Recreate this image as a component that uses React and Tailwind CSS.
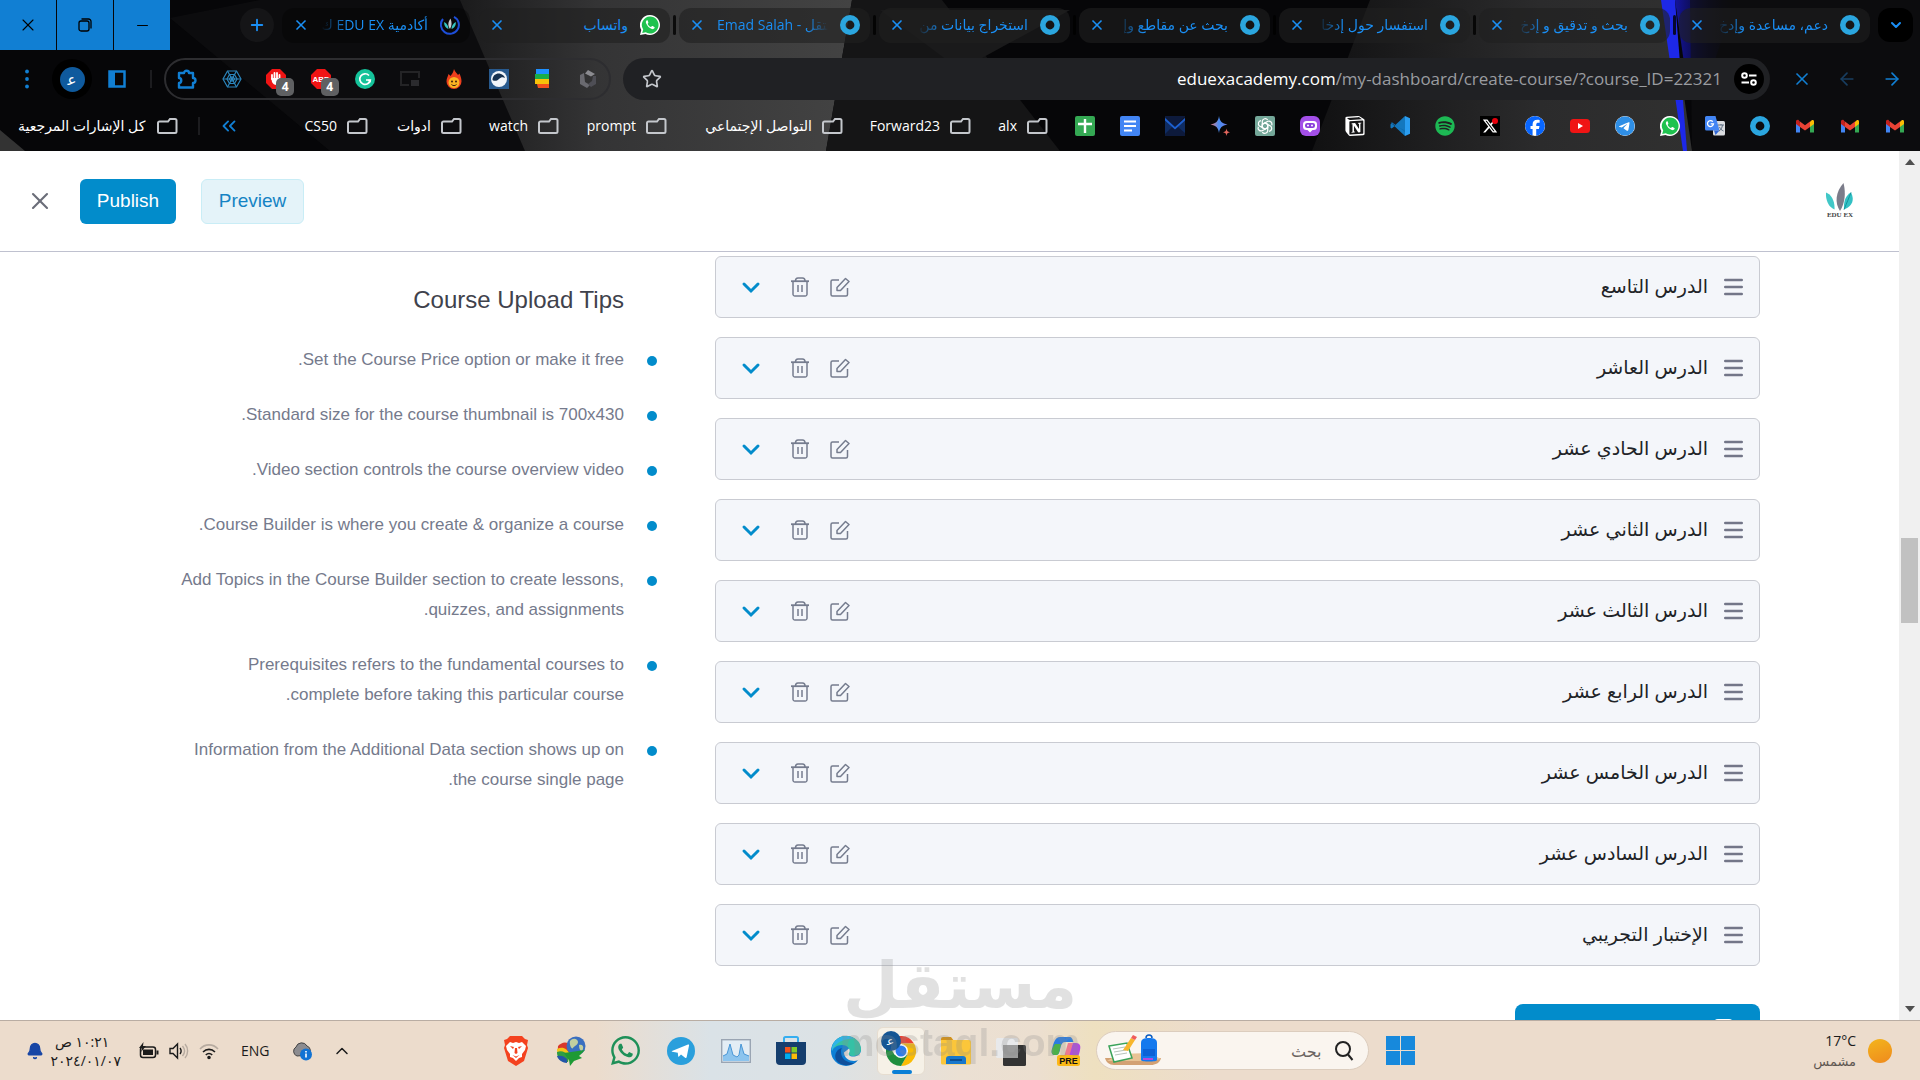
import React from "react";
import {
  FaWhatsapp,
  FaXTwitter,
  FaFacebook,
  FaSpotify,
  FaTelegram,
} from "react-icons/fa6";
import { SiNotion } from "react-icons/si";
import {
  ArrowLeft,
  ArrowRight,
  Bell,
  ChevronDown,
  ChevronUp,
  ChevronsLeft,
  Minus,
  Plus,
  Star,
  X,
} from "lucide-react";

/* ---------- shared small drawings ---------- */

const Ring = () => (
  <svg viewBox="0 0 20 20" className="size-5 shrink-0">
    <circle cx="10" cy="10" r="7.200" fill="none" stroke="#2ba6df" strokeWidth="5.600" />
  </svg>
);

const WhatsappBadge = () => (
  <svg viewBox="0 0 20 20" className="size-5 shrink-0">
    <path d="M10 0a10 10 0 1 1-4.600 18.900L0 20l1.300-5A10 10 0 0 1 10 0z" fill="#fff" />
    <path d="M10 1.500a8.500 8.500 0 1 1-4.300 15.800L2.200 18l1-3.400A8.500 8.500 0 0 1 10 1.500z" fill="#1fc24f" />
    <path
      d="M6.800 5.300c-1 .8-1.200 2-.6 3.200 1.200 2.700 3 4.500 5.600 5.500 1.200.4 2.200 0 2.800-1 .2-.4.100-.8-.3-1l-1.700-.9c-.4-.2-.7-.1-.9.2l-.6.8c-1.500-.6-2.700-1.700-3.500-3.200l.6-.8c.2-.3.200-.5.100-.8L7.700 5.600c-.2-.4-.5-.5-.9-.3z"
      fill="#fff"
    />
  </svg>
);

const EduTabIcon = () => (
  <svg viewBox="0 0 20 20" className="size-5 shrink-0">
    <path d="M3 4A9 9 0 1 0 14 1.800" fill="none" stroke="#1d4ed8" strokeWidth="2" />
    <path d="M10 14C7.500 11 8 7 10.500 3.500 12 7 12 11 10 14z" fill="#c9ccd1" />
    <path d="M8.500 14C5 12.500 4 10 4.200 7 7 8.500 8.500 11 8.500 14z" fill="#35c3c1" />
    <path d="M11.500 14c0-3 1.500-5.500 4.300-7 .2 3-.8 5.500-4.300 7z" fill="#35c3c1" />
  </svg>
);

const FolderIcon = () => (
  <svg viewBox="0 0 21 18" className="h-[18px] w-[21px] shrink-0">
    <path
      d="M2.500 4.500h8.500l2-2.500h5a1.500 1.500 0 0 1 1.500 1.500v11a1.500 1.500 0 0 1-1.500 1.500h-15.500a1.500 1.500 0 0 1-1.500-1.500v-8.500a1.500 1.500 0 0 1 1.500-1.500z"
      fill="none"
      stroke="#c4c7cc"
      strokeWidth="2"
    />
  </svg>
);

const GmailIcon = () => (
  <svg viewBox="0 0 20 20" className="size-5">
    <path d="M1 5v11.500h4V9z" fill="#4285f4" />
    <path d="M19 5v11.500h-4V9z" fill="#34a853" />
    <path d="M1 5.500V8l4 3V6.500L3.500 4C2 3.500 1 4.500 1 5.500z" fill="#c5221f" />
    <path d="M3 4l2 2v5l5 3.500L15 11V6l2-2-7 5.300z" fill="#ea4335" />
    <path d="M19 5.500V8l-4 3V6l1.500-1.500C18 3.500 19 4.500 19 5.500z" fill="#fbbc04" />
  </svg>
);

const TranslateIcon = () => (
  <svg viewBox="0 0 20 20" className="size-5">
    <rect x="8" y="5" width="12" height="14.500" rx="1.500" fill="#dadce0" />
    <path d="M1.500 0h9l4 14.500H1.500A1.500 1.500 0 0 1 0 13V1.500A1.500 1.500 0 0 1 1.500 0z" fill="#4285f4" />
    <path d="M9 14.500h5.500L10.500 19z" fill="#3067d5" />
    <path d="M7.800 5.600a3 3 0 1 0 .7 2.200H5.700" fill="none" stroke="#fff" strokeWidth="1.300" />
    <path d="M13 9h6M16 8v1M14 15c2-1 3-3 3.500-6M14.500 11c.8 2 2 3 4 4" stroke="#5f6f82" fill="none" />
  </svg>
);

const VsCodeIcon = () => (
  <svg viewBox="0 0 20 20" className="size-5">
    <path d="M15 0 4.500 9.700 1.700 7.500.5 8.200v3.600l1.200.7 2.800-2.200L15 20V5.500L8.500 10 15 14.500z" fill="#1478bd" />
    <path d="M15 0l5 2.200v15.600L15 20z" fill="#2a9df0" />
    <path d="M15 14.500.7 7.200l1.300-1L15 16z" fill="#0f6cb0" />
  </svg>
);

const BotIcon = () => (
  <svg viewBox="0 0 20 20" className="size-5">
    <rect width="20" height="20" rx="6" fill="#a34fe8" />
    <rect x="3" y="5" width="14" height="9" rx="3.500" fill="#fff" />
    <rect x="5" y="7" width="10" height="5" rx="2.200" fill="#8b3fdc" />
    <circle cx="8" cy="9.500" r="1" fill="#fff" />
    <circle cx="12" cy="9.500" r="1" fill="#fff" />
    <path d="M7 13.500h6l-3 3z" fill="#fff" />
  </svg>
);

const GptIcon = () => (
  <svg viewBox="0 0 20 20" className="size-5">
    <rect width="20" height="20" rx="2" fill="#74a799" />
    <g fill="none" stroke="#fff" strokeWidth="1.200">
      {[0, 60, 120, 180, 240, 300].map((a) => (
        <path key={a} transform={`rotate(${a} 10 10)`} d="M7.300 8.400V5.200a3 3 0 0 1 5.400-1.300M7.300 8.400l2.700-1.600 2.800 1.600" />
      ))}
    </g>
  </svg>
);

const SparkIcon = () => (
  <svg viewBox="0 0 20 20" className="size-5">
    <defs>
      <linearGradient id="spark" x1="0" y1="0" x2="1" y2="0">
        <stop offset="0" stopColor="#e07a7a" />
        <stop offset=".5" stopColor="#4a8df5" />
        <stop offset="1" stopColor="#6d7be0" />
      </linearGradient>
    </defs>
    <path d="M9 0c.8 5.500 3 7.500 8.500 8.500C12 9.500 9.800 11.500 9 17 8.200 11.500 6 9.500.5 8.500 6 7.500 8.200 5.500 9 0z" fill="url(#spark)" />
    <path d="M16.500 12.500c.4 2.600 1 3.300 3.500 3.700-2.500.5-3.100 1.200-3.500 3.800-.4-2.600-1-3.300-3.500-3.800 2.500-.4 3.100-1.100 3.500-3.700z" fill="#e5675e" />
  </svg>
);

const EnvelopeXIcon = () => (
  <svg viewBox="0 0 20 20" className="size-5">
    <rect width="20" height="20" fill="#0d1a3c" />
    <path d="M0 0l10 11L20 0v4L10 14 0 4z" fill="#10172e" />
    <path d="M0 1l10 10L20 3v14l-7-6-3 2.500L7 11l-7 7z" fill="#0f2c62" />
    <path d="M0 2l10 9L20 2v2.500L10 13.500 0 4.500z" fill="#1d5fd0" />
  </svg>
);

const DocsIcon = () => (
  <svg viewBox="0 0 20 20" className="size-5">
    <rect width="20" height="20" rx="2" fill="#4285f4" />
    <path d="M4 5.500h12M4 10h12M4 14.500h8" stroke="#fff" strokeWidth="2" />
  </svg>
);

const SheetsIcon = () => (
  <svg viewBox="0 0 20 20" className="size-5">
    <rect width="20" height="20" rx="2" fill="#34a853" />
    <path d="M3 8h14M10 3v14" stroke="#fff" strokeWidth="2.400" />
  </svg>
);

/* ---------- browser window ---------- */

const Wallpaper = () => (
  <svg viewBox="0 0 1920 151" preserveAspectRatio="none" className="absolute inset-0 size-full" aria-hidden="true">
    <defs>
      <linearGradient id="wGray" x1="0" x2="1">
        <stop offset="0" stopColor="#1b1b1c" />
        <stop offset=".35" stopColor="#343435" />
        <stop offset="1" stopColor="#434343" />
      </linearGradient>
      <linearGradient id="wMid" x1="0" x2="1">
        <stop offset="0" stopColor="#111112" />
        <stop offset=".6" stopColor="#2b2b2c" />
        <stop offset="1" stopColor="#303030" />
      </linearGradient>
      <linearGradient id="wBlue" x1="0" x2="1">
        <stop offset="0" stopColor="#1414a0" />
        <stop offset="1" stopColor="#08081a" stopOpacity="0" />
      </linearGradient>
    </defs>
    <rect width="1920" height="151" fill="#060608" />
    <path d="M170 18 260 0h230l35 151H330z" fill="#101011" opacity=".7" />
    <path d="M460 0h392l-26 151H525z" fill="url(#wGray)" />
    <path d="M852 0h90l118 151H826z" fill="#151516" />
    <path d="M880 10h190l-110 60z" fill="#1a1a1b" />
    <path d="M1370 0h300l22 151h-380z" fill="url(#wMid)" />
    <path d="M1675 0h60l-20 60-30 10z" fill="url(#wBlue)" />
    <path d="M1690 0h230v151h-228z" fill="#101012" opacity=".6" />
    <path d="M1661 0h14l12 151h-4z" fill="#1d28e8" />
    <path d="M0 130l25 21H0z" fill="#333" />
  </svg>
);

const tabs = [
  { title: "دعم، مساعدة وإدخ", icon: <Ring />, fade: true },
  { title: "بحث و تدقيق و إدخ", icon: <Ring />, fade: true },
  { title: "استفسار حول إدخا", icon: <Ring />, fade: true },
  { title: "بحث عن مقاطع وإ", icon: <Ring />, fade: true },
  { title: "استخراج بيانات من", icon: <Ring />, fade: true },
  { title: "Emad Salah - مستقل", icon: <Ring />, ltr: true },
  { title: "واتساب", icon: <WhatsappBadge /> },
  { title: "أكادمية EDU EX ك", icon: <EduTabIcon />, fade: true, active: true },
];

const Tab = ({ tab }) => (
  <div
    role="tab"
    aria-selected={!!tab.active}
    className={
      "flex h-[35px] items-center gap-3 rounded-xl ps-2.5 " +
      (tab.active ? "w-[188px] bg-black/30 pe-[11px]" : "w-[191px] bg-[#202020]/60 pe-2.5")
    }
  >
    {tab.icon}
    <span
      dir={tab.ltr ? "ltr" : "rtl"}
      className={
        "min-w-0 flex-1 overflow-hidden text-[14px] leading-6 whitespace-nowrap text-[#1a8ff5] " +
        (tab.fade ? "[mask-image:linear-gradient(to_left,black_75%,transparent)]" : "") +
        (tab.ltr ? "[mask-image:linear-gradient(to_right,black_80%,transparent)]" : "")
      }
    >
      {tab.title}
    </span>
    <button aria-label="إغلاق" className="text-[#1a8ff5]">
      <X size={16} strokeWidth={2.5} />
    </button>
  </div>
);

const TabStrip = () => (
  <div className="flex h-[50px] items-center">
    <button aria-label="بحث" className="ms-[7px] flex h-[34px] w-[35px] items-center justify-center rounded-xl bg-black text-[#1a8ff5]">
      <ChevronDown size={16} strokeWidth={3} />
    </button>
    <div role="tablist" className="ms-2 flex items-center">
      {tabs.map((t, i) => (
        <React.Fragment key={t.title}>
          {i > 0 && (
            <span className={"mx-[3px] h-5 w-[3px] rounded " + (t.active ? "bg-transparent" : "bg-black/80")} />
          )}
          <Tab tab={t} />
        </React.Fragment>
      ))}
    </div>
    <button aria-label="علامة تبويب جديدة" className="ms-2 flex size-[34px] items-center justify-center rounded-full bg-[#151517] text-[#1a8ff5]">
      <Plus size={18} strokeWidth={2.5} />
    </button>
    <div className="ms-auto flex h-full gap-px text-black">
      <button aria-label="تصغير" className="flex w-14 items-center justify-center bg-[#117fd3]">
        <Minus size={17} strokeWidth={1.5} />
      </button>
      <button aria-label="استعادة" className="flex w-14 items-center justify-center bg-[#117fd3]">
        <svg viewBox="0 0 14 14" className="size-3.5" fill="none" stroke="currentColor" strokeWidth="1.300">
          <rect x="1" y="3" width="10" height="10" rx="2" />
          <path d="M3.500 1h7A2.500 2.500 0 0 1 13 3.500v7" />
        </svg>
      </button>
      <button aria-label="إغلاق النافذة" className="flex w-14 items-center justify-center bg-[#117fd3]">
        <X size={20} strokeWidth={1.3} />
      </button>
    </div>
  </div>
);

const Blocker = ({ children }) => (
  <span className="relative block size-5">
    <svg viewBox="0 0 20 20" className="size-5">
      <path d="M6 0h8l6 6v8l-6 6H6l-6-6V6z" fill="#f01414" />
      {children}
    </svg>
    <span className="absolute top-[9px] left-[10px] flex h-[18px] w-[18px] items-center justify-center rounded-[5px] bg-[#5f6062] text-[12px] font-bold text-white">
      4
    </span>
  </span>
);

const extensions = [
  ["Polygon", <svg viewBox="0 0 20 20" className="size-5"><path d="M10 1l7 4-4 2.500-6-3z" fill="#8b8b90" /><path d="M2 6l4-2 1 9 5 3-3 3-7-4z" fill="#6a6a70" /><path d="M18 7v8l-5 3-3-3 4-3 1-5z" fill="#4e4e55" /></svg>],
  ["Stack", <svg viewBox="0 0 20 20" className="size-5"><path d="M3 0h13v5H3z" fill="#1e90ff" /><path d="M2 5h14v5H2z" fill="#18ae4a" /><path d="M2 10h14v5H2z" fill="#f9c20a" /><path d="M4 15h12v4H5z" fill="#f4511e" /></svg>],
  ["Wave", <svg viewBox="0 0 20 20" className="size-5"><rect width="20" height="20" fill="#285a8e" /><circle cx="10" cy="10" r="8" fill="#f2f6fa" /><path d="M3.500 11c0-5 4-7 7-6.500 3 .5 5 2.500 5.500 4.500-2-1.500-4-1-6 1s-4.500 2.500-6.500 1z" fill="#17324f" /></svg>],
  ["Flame", <svg viewBox="0 0 20 20" className="size-5"><path d="M10 0c1 3 3 4 4 6l1.500-1.500C17 8 17.500 10 17.500 12.500a7.500 7.500 0 0 1-15 0C2.500 9 4 7.500 4.500 5L6.500 7C8 5 9.500 3 10 0z" fill="#ee3f1d" /><circle cx="10" cy="13.500" r="5.500" fill="#fbb423" /><circle cx="8" cy="12.500" r="1" fill="#402010" /><circle cx="12" cy="12.500" r="1" fill="#402010" /><path d="M7.500 15.500c1.500 1.500 3.500 1.500 5 0" stroke="#402010" fill="none" /></svg>],
  ["Picture in picture", <svg viewBox="0 0 20 20" className="size-5"><path d="M19 9V3H1v13h8" fill="none" stroke="#242426" strokeWidth="2" /><rect x="11" y="11" width="8" height="6" fill="#2b2b2e" /></svg>],
  ["Grammar", <svg viewBox="0 0 20 20" className="size-5"><circle cx="10" cy="10" r="10" fill="#15c39a" /><path d="M14 6.500A5.300 5.300 0 1 0 15.300 11H11" fill="none" stroke="#fff" strokeWidth="1.700" /><path d="M13.500 10.800l2 2.500" stroke="#fff" strokeWidth="1.500" /></svg>],
  ["Ad block plus", <Blocker><text x="10" y="13" fontSize="8" fontWeight="700" textAnchor="middle" fill="#fff" fontFamily="Liberation Sans, sans-serif">ABP</text></Blocker>],
  ["Ad block", <Blocker><path d="M6 10V6M8.500 9V4M11 9V4M13.500 10V6" stroke="#fff" strokeWidth="1.800" strokeLinecap="round" /><path d="M5.200 9h9.200v3c0 2.500-1.500 4-4 4-2 0-3.500-1-4.400-3z" fill="#fff" /></Blocker>],
  ["Web", <svg viewBox="0 0 20 20" className="size-5" fill="none" stroke="#2c86bd" strokeWidth="1.200"><path d="M5.500 2h9l4.500 8-4.500 8h-9L1 10z" /><path d="M7.500 5.500h5L15 10l-2.500 4.500h-5L5 10z" /><path d="M8.700 8h2.600l1.200 2-1.200 2H8.700l-1.200-2z" /><path d="M5.500 2l9 16M14.500 2l-9 16M1 10h18" /></svg>],
  ["Extensions", <svg viewBox="0 0 20 20" className="size-5" fill="none" stroke="#117fd3" strokeWidth="2.400" strokeLinejoin="round"><path d="M2 4h5c0-3 5-3 5 0h4v5c3.300 0 3.300 5 0 5v4.500H2V14c3 0 3-5 0-5z" /></svg>],
];

/* The joiner keeps the letter in its open, initial shape. */
const AVATAR = "ع\u200d";

const Toolbar = () => (
  <div className="mt-2 flex h-[42px] items-center">
    <div className="ms-[18px] me-[22px] flex gap-[25px] text-[#117fd3]">
      <button aria-label="رجوع"><ArrowRight size={20} /></button>
      <button aria-label="تقدم" className="text-[#183e60]"><ArrowLeft size={20} /></button>
      <button aria-label="إيقاف"><X size={20} /></button>
    </div>
    <div className="flex h-full min-w-0 flex-1 items-center rounded-full bg-[#202124] ps-1.5 pe-[19px]">
      <button aria-label="معلومات الموقع" className="flex size-[30px] shrink-0 items-center justify-center rounded-full bg-black text-white">
        <svg viewBox="0 0 16 14" className="h-3.5 w-4" fill="none" stroke="currentColor" strokeWidth="2">
          <circle cx="3.500" cy="3.500" r="2.300" />
          <path d="M8 3.500h7.500M.5 10.500H8" />
          <circle cx="12.500" cy="10.500" r="2.300" />
        </svg>
      </button>
      <div dir="ltr" className="min-w-0 flex-1 overflow-hidden pe-3 text-right text-[17px] whitespace-nowrap text-[#9a9ca0]">
        <span className="text-white">eduexacademy.com</span>/my-dashboard/create-course/?course_ID=22321
      </div>
      <button aria-label="إضافة إشارة" className="text-[#c4c7cc]">
        <Star size={20} strokeWidth={2} />
      </button>
    </div>
    <div className="ms-3 flex h-full w-[447px] items-center justify-between rounded-full border-2 border-[#2d2d30] px-[11px]">
      {extensions.map(([name, icon]) => (
        <button key={name} aria-label={name}>{icon}</button>
      ))}
    </div>
    <span className="ms-3 h-[18px] w-0.5 bg-[#1c1c1f]" />
    <button aria-label="اللوحة الجانبية" className="ms-6">
      <svg viewBox="0 0 18 18" className="size-[18px]">
        <rect x="1.500" y="1.500" width="15" height="15" fill="none" stroke="#117fd3" strokeWidth="2.500" />
        <rect x="1" y="1" width="6" height="16" fill="#117fd3" />
      </svg>
    </button>
    <button className="ms-4 flex size-10 items-center justify-center rounded-full bg-black">
      <span className="flex size-[25px] items-center justify-center rounded-full bg-[#0f5a9d] text-[15px] leading-none text-white">{AVATAR}</span>
    </button>
    <button aria-label="القائمة" className="ms-[15px] me-[17px]">
      <svg viewBox="0 0 20 20" className="size-5" fill="#117fd3">
        <circle cx="10" cy="2.500" r="1.900" /><circle cx="10" cy="10" r="1.900" /><circle cx="10" cy="17.500" r="1.900" />
      </svg>
    </button>
  </div>
);

const shortcuts = [
  ["Gmail 1", <GmailIcon />],
  ["Gmail 2", <GmailIcon />],
  ["Gmail 3", <GmailIcon />],
  ["Mostaql", <Ring />],
  ["Translate", <TranslateIcon />],
  ["WhatsApp", <WhatsappBadge />],
  ["Telegram", <FaTelegram size={20} color="#2f8fe6" className="rounded-full bg-white" />],
  ["YouTube", <svg viewBox="0 0 20 20" className="size-5"><rect y="3" width="20" height="14" rx="3.500" fill="#f01414" /><path d="M8 7l5 3-5 3z" fill="#fff" /></svg>],
  ["Facebook", <FaFacebook size={20} color="#0866ff" className="rounded-full bg-white" />],
  ["X", <span className="relative block bg-black"><FaXTwitter size={20} color="#fff" className="p-0.5" /><span className="absolute top-0.5 right-0.5 size-1.5 rounded-full bg-red-600" /></span>],
  ["Spotify", <FaSpotify size={20} color="#1db954" />],
  ["VS Code", <VsCodeIcon />],
  ["Notion", <SiNotion size={20} color="#fff" />],
  ["Poe", <BotIcon />],
  ["ChatGPT", <GptIcon />],
  ["Bard", <SparkIcon />],
  ["Mail", <EnvelopeXIcon />],
  ["Docs", <DocsIcon />],
  ["Sheets", <SheetsIcon />],
];

const folders = [
  ["alx", "w-[49px]"],
  ["Forward23", "w-[100px]"],
  ["التواصل الإجتماعي", "w-[148px]"],
  ["prompt", "w-[80px]"],
  ["watch", "w-[69px]"],
  ["ادوات", "w-[66px]"],
  ["CS50", "w-[65px]"],
];

const Bookmarks = () => (
  <div className="flex h-[51px] items-center text-[14px] text-white">
    <div className="ms-[15px] flex items-center gap-[25px]">
      {shortcuts.map(([name, icon]) => (
        <a key={name} href="#" aria-label={name} className="block">{icon}</a>
      ))}
    </div>
    <div className="ms-[27px] flex items-center gap-7">
      {folders.map(([name, w]) => (
        <button key={name} className={"flex items-center gap-2.5 whitespace-nowrap " + w}>
          <FolderIcon />
          {name}
        </button>
      ))}
    </div>
    <button aria-label="المزيد" className="ms-auto text-[#117fd3]"><ChevronsLeft size={22} /></button>
    <span className="ms-[18px] h-[18px] w-0.5 bg-[#1c1c1f]" />
    <button className="ms-5 me-[18px] flex items-center gap-3 whitespace-nowrap">
      <FolderIcon />
      كل الإشارات المرجعية
    </button>
  </div>
);

/* ---------- page ---------- */

const EduLogo = () => (
  <a href="#" className="flex w-7 flex-col items-center" aria-label="EDU EX">
    <svg viewBox="0 0 28 28" className="size-7">
      <path d="M14 28C8.500 20 9.500 9 17.500 0 20 10 19 20 14 28z" fill="#7b7c8a" />
      <path d="M0 9.500c5.500 2 9 8.500 8.500 17C2.500 24-.5 17 0 9.500z" fill="#41c7c7" />
      <path d="M25 9.500c3.500 7 2 13.500-7 17C17.500 18 19.500 12.500 25 9.500z" fill="#32c0c4" />
      <path d="M25 9.500c-2 5-4 10-7 17" stroke="#12939c" fill="none" />
    </svg>
    <span dir="ltr" className="font-['Liberation_Serif',serif] text-[7px] leading-[8px] font-bold whitespace-nowrap text-[#444]">EDU EX</span>
  </a>
);

const HeaderBar = () => (
  <header className="flex h-[101px] shrink-0 items-center border-b border-[#bfc1cf] bg-white ps-[45px] pe-[26px]">
    <EduLogo />
    <button className="ms-auto h-[45px] min-w-[103px] rounded-md border border-[#c9edf6] bg-[#e4f3f9] px-4 text-[19px] text-[#1583c4]">Preview</button>
    <button className="ms-[25px] h-[45px] min-w-24 rounded-md bg-[#028ccb] px-4 text-[19px] text-white">Publish</button>
    <button aria-label="إغلاق" className="ms-[26px] text-[#6a6d78]">
      <X size={28} strokeWidth={1.8} />
    </button>
  </header>
);

const lessons = [
  "الدرس التاسع",
  "الدرس العاشر",
  "الدرس الحادي عشر",
  "الدرس الثاني عشر",
  "الدرس الثالث عشر",
  "الدرس الرابع عشر",
  "الدرس الخامس عشر",
  "الدرس السادس عشر",
  "الإختبار التجريبي",
];

const LessonCard = ({ title }) => (
  <li className="flex h-[62px] items-center rounded-md border border-[#c9cbd2] bg-[#f4f6fa] ps-4 pe-[25px]">
    <button aria-label="تحريك" className="text-[#737688]">
      <svg viewBox="0 0 19 18" className="h-[18px] w-[19px]" stroke="currentColor" strokeWidth="2.400" strokeLinecap="round">
        <path d="M1.200 2h16.600M1.200 9h16.600M1.200 16h16.600" />
      </svg>
    </button>
    <span className="ms-4 text-[19px] text-[#212327]">{title}</span>
    <button aria-label="تعديل" className="ms-auto text-[#757c8e]">
      <svg viewBox="0 0 20 20" className="size-5" fill="none" stroke="currentColor" strokeWidth="1.500" strokeLinejoin="round">
        <path d="M9 3H2.500A1.500 1.500 0 0 0 1 4.500v13A1.500 1.500 0 0 0 2.500 19H16a1.500 1.500 0 0 0 1.500-1.500V11" />
        <path d="M7 10.500 15.500 1.500 19 4.500 10.500 13.500H7z" />
      </svg>
    </button>
    <button aria-label="حذف" className="ms-5 text-[#757c8e]">
      <svg viewBox="0 0 20 20" className="size-5" fill="none" stroke="currentColor" strokeWidth="1.500">
        <path d="M1 4.200h18" strokeWidth="1.800" />
        <path d="M5.500 4C5.500 2 6 1 8 1h4.500c2 0 2.500 1 2.500 3M3 4.500V17.500A1.700 1.700 0 0 0 4.700 19H15.300A1.700 1.700 0 0 0 17 17.500V4.500M8 8v7M12 8v7" />
      </svg>
    </button>
    <button aria-label="توسيع" className="ms-[29px] text-[#028ccb]">
      <svg viewBox="0 0 20 20" className="size-5" fill="none" stroke="currentColor" strokeWidth="3" strokeLinecap="round" strokeLinejoin="miter">
        <path d="M3 7l7 7 7-7" />
      </svg>
    </button>
  </li>
);

const tips = [
  "Set the Course Price option or make it free.",
  "Standard size for the course thumbnail is 700x430.",
  "Video section controls the course overview video.",
  "Course Builder is where you create & organize a course.",
  "Add Topics in the Course Builder section to create lessons, quizzes, and assignments.",
  "Prerequisites refers to the fundamental courses to complete before taking this particular course.",
  "Information from the Additional Data section shows up on the course single page.",
];

const Tips = () => (
  <aside className="w-[479px] shrink-0 pt-[33px]">
    <h2 className="ps-[33px] text-[24px] leading-[30px] text-[#3f424c]">Course Upload Tips</h2>
    <ul className="mt-[30px] flex flex-col gap-[25px] text-[17px] leading-[30px] text-[#757a8c]">
      {tips.map((t) => (
        <li key={t} className="flex gap-[23px]">
          <span className="mt-[11px] size-2.5 shrink-0 rounded-full bg-[#028ccb]" />
          <span className="min-w-0">{t}</span>
        </li>
      ))}
    </ul>
  </aside>
);

const Scrollbar = () => (
  <div className="flex w-[21px] shrink-0 flex-col items-center bg-[#f0f0f0]" aria-hidden="true">
    <svg viewBox="0 0 10 6" className="mt-2 h-1.5 w-2.5"><path d="M0 6l5-6 5 6z" fill="#505050" /></svg>
    <span className="mt-[373px] h-[85px] w-[17px] bg-[#c1c1c1]" />
    <svg viewBox="0 0 10 6" className="mt-auto mb-2 h-1.5 w-2.5"><path d="M0 0l5 6 5-6z" fill="#505050" /></svg>
  </div>
);

/* ---------- taskbar ---------- */

const taskApps = [
  ["Copilot", <svg viewBox="0 0 30 32" className="h-8 w-[30px]"><path d="M9 2h9c3 0 3.500 2 4.500 5H14c-3 0-4 3-5 8-1 4-2 5-5 5-3 0-4-2-3-6C2.500 8 4 2 9 2z" fill="#2b7de0" /><path d="M4 9h6l-2 9c-1 2-2 2-4 2-3 0-4-2-3-6z" fill="#4cb04a" /><path d="M22 8h3c4 0 5 3 4 7-1 6-3 9-7 9h-9c3 0 4-3 5-8z" fill="#b14be0" /><path d="M22 8h-5l-4 14h5z" fill="#ee7a8f" /><rect x="6" y="20" width="23" height="11" rx="2.500" fill="#fbb917" /><text x="17.500" y="29" fontSize="9" fontWeight="700" textAnchor="middle" fill="#111" fontFamily="Liberation Sans, sans-serif">PRE</text></svg>],
  ["Task view", <svg viewBox="0 0 30 30" className="size-[30px]"><rect x="7" y="9" width="23" height="21" rx="1.500" fill="#333" /><rect y="2" width="22" height="20" rx="1.500" fill="#e8eaed" fillOpacity=".9" /><path d="M7 9h15v13H7z" fill="#9c9c9c" /></svg>],
  ["Explorer", <svg viewBox="0 0 30 28" className="h-7 w-[30px]"><path d="M0 2a2 2 0 0 1 2-2h8l3 4H0z" fill="#d9920f" /><path d="M0 3h28a2 2 0 0 1 2 2v21a1.500 1.500 0 0 1-1.500 1.500h-27A1.500 1.500 0 0 1 0 26z" fill="#fbc63a" /><path d="M5 27v-5a3 3 0 0 1 3-3h14a3 3 0 0 1 3 3v5z" fill="#1878cc" /><path d="M9 23h12" stroke="#0b4f94" strokeWidth="2" /></svg>],
  ["Chrome", null],
  ["Edge", <svg viewBox="0 0 30 30" className="size-[30px]"><circle cx="15" cy="15" r="15" fill="#0c7fd6" /><path d="M1 11C3 4 9 0 15 0c9 0 15 6 15 13 0 5-4 7-8 7-3 0-5-1-4-3 2-3-1-8-7-8-5 0-9 3-10 6z" fill="#35c1a5" /><path d="M1 11C3 4 9 0 15 0c3 0 6 1 8 2.500C14 3 5 5 1 15z" fill="#2db5e8" /><path d="M10 16c0 7 6 11 13 11l4-3c-5 6-16 8-22 0-2-4 0-11 6-12-1 1-1 2-1 4z" fill="#0e4f9b" /><path d="M30 15c-1 4-4 5.500-8 5.500-3 0-5-1.500-4-3.500 1-1.500 1-3 0-4.500l-5 4c0 5 5 8.500 10 8.500 3 0 5-1 7-3z" fill="#e7e0da" /></svg>],
  ["Store", <svg viewBox="0 0 30 30" className="size-[30px]"><path d="M8 7V2.500A1.500 1.500 0 0 1 9.500 1h11A1.500 1.500 0 0 1 22 2.500V7" fill="none" stroke="#35aef0" strokeWidth="2" /><path d="M0 6h30v19a4 4 0 0 1-4 4H4a4 4 0 0 1-4-4z" fill="#153e6e" /><path d="M9 11h5.500v5.500H9z" fill="#f1511b" /><path d="M15.500 11H21v5.500h-5.500z" fill="#80cc28" /><path d="M9 17.500h5.500V23H9z" fill="#00adef" /><path d="M15.500 17.500H21V23h-5.500z" fill="#fbbc09" /></svg>],
  ["Monitor", <svg viewBox="0 0 30 24" className="h-6 w-[30px]"><rect x=".7" y=".7" width="28.600" height="22.600" fill="#e3edf5" stroke="#9aa5b3" strokeWidth="1.400" /><path d="M2 22v-5l4-2 3-10 3 11 4 2 2-2 2-11 3 10 5 2v5z" fill="#8cc4ee" /><path d="M2 17l4-2 3-10 3 11 4 2 2-2 2-11 3 10 5 2" fill="none" stroke="#4a97d6" /></svg>],
  ["Telegram", <svg viewBox="0 0 28 28" className="size-7"><circle cx="14" cy="14" r="14" fill="#2a9fdc" /><path d="M5 14 21 7.500c.8-.3 1.300.2 1 1.200L19.700 20c-.2 1-.8 1.200-1.600.7L14 17.600l-2 2c-.4.4-.7.300-.8-.3l-.4-3.600L5.300 14.800c-.8-.2-.9-.6-.3-.8z" fill="#fff" /></svg>],
  ["WhatsApp", <FaWhatsapp size={33} color="#1e9058" />],
  ["Download manager", <svg viewBox="0 0 30 30" className="size-[30px]"><path d="M2 10c5-5 10-5 15 2l-4 11C5 25 1 18 2 10z" fill="#d8372c" /><path d="M1 13c6-3 10 0 13 5l-2 7C5 26 1 21 1 13z" fill="#f5c518" /><path d="M1 16c5-2 8 0 12 4l-1 6C6 27 1 23 1 16z" fill="#2f9d45" /><path d="M1 20c4-1 7 0 10 3v4C7 27 2 24 1 20z" fill="#2455a8" /><circle cx="20" cy="10" r="9.500" fill="#3a6fc0" /><path d="M14 5c3-4 8-2 8 1s-4 4-5 6-4-3-3-7zM23 9c3-1 5 1 4 4s-4 2-4-4z" fill="#c3cfa0" /><path d="M8 17l21-3-6 6 3 2-8 3-4 5-1-6z" fill="#1e9a35" /></svg>],
  ["Brave", <svg viewBox="0 0 26 30" className="h-[30px] w-[26px]"><path d="M7 0h12l3 3 3 1-1 5 1 3-4 13-8 5-8-5L1 12l1-3-1-5 3-1z" fill="#f4421f" /><path d="M7 6l3 1 3-1 3 1 3-1 4 4-1 4-3 4 0 3-3 1-3 3-3-3-3-1v-3l-3-4-1-4z" fill="#fff" /><path d="M7 10l4 1-1 2zM19 10l-4 1 1 2zM12 12h2l.5 5-1.500 1-1.500-1zM9.500 19l3.500 1.500 3.500-1.500-3.500 3z" fill="#f4421f" /></svg>],
];

const ChromeIcon = () => (
  <span className="relative flex size-12 items-center justify-center rounded-md border border-[#e6ddd0] bg-[#f6f1e7]">
    <svg viewBox="0 0 30 30" className="size-[30px]">
      <path d="M15 15 2 7.500A15 15 0 0 1 28 7.500H15z" fill="#ea4335" />
      <path d="M28 7.500A15 15 0 0 1 15 30l6.500-11.200L15 7.500z" fill="#fbbc04" />
      <path d="M2 7.500A15 15 0 0 0 15 30l6.500-11.200h-13z" fill="#1e8e3e" />
      <circle cx="15" cy="15" r="7" fill="#fff" />
      <circle cx="15" cy="15" r="5.500" fill="#2b7bee" />
    </svg>
    <span className="absolute top-[3px] left-[3px] flex size-5 items-center justify-center rounded-full bg-[#145594] text-[12px] leading-none text-white">{AVATAR}</span>
    <span className="absolute bottom-0 left-3.5 h-1 w-5 rounded-full bg-[#0a7fd6]" />
  </span>
);

const Taskbar = () => (
  <footer className="flex h-[60px] shrink-0 items-center border-t border-[#b9ada3] bg-[linear-gradient(90deg,#ecdccc_0%,#ecdccc_31%,#dae2e7_37%,#dce2e5_43%,#ebe0d3_50%,#ecdfd0_54%,#eee0c0_57%,#ecdccc_63%,#ecdccc_100%)] text-[#1b1b1b]">
    <button className="ms-7 flex items-center gap-3">
      <span className="size-6 rounded-full bg-[linear-gradient(160deg,#f3b51d,#ef8a1d)]" />
      <span className="text-right leading-[21px]">
        <span dir="ltr" className="block text-[14px]">17°C</span>
        <span className="block text-[13px] text-[#5e5751]">مشمس</span>
      </span>
    </button>
    <div className="ms-auto flex items-center">
      <button aria-label="ابدأ">
        <svg viewBox="0 0 29 29" className="size-[29px]" fill="#1789dc"><path d="M0 0h14v14H0zM15 0h14v14H15zM0 15h14v14H0zM15 15h14v14H15z" /></svg>
      </button>
      <label className="ms-[17px] flex h-[39px] w-[273px] items-center rounded-full border border-[#dccdbe] bg-[#faf5ef] ps-3.5 pe-2">
        <svg viewBox="0 0 20 20" className="size-5 shrink-0" fill="none" stroke="#222" strokeWidth="2"><circle cx="9" cy="8" r="7" /><path d="M14 13.500l4.500 5.500" /></svg>
        <input aria-label="بحث" placeholder="بحث" className="ms-3 min-w-0 flex-1 bg-transparent text-[16px] outline-none placeholder:text-[#6a6460]" />
        <svg viewBox="0 0 56 34" className="h-[34px] w-14 shrink-0">
          <path d="M0 24h56c-1 5-6 7-10 7H9c-5 0-8-3-9-7z" fill="#d3a173" />
          <path d="M14 20l30-1 12 6-10 2H2z" fill="#e8c394" />
          <path d="M4 12l18-3 5 15-18 4z" fill="#fff" stroke="#3ba35a" strokeWidth="1.500" />
          <path d="M8 15l12-2M9 18l12-2M10 21l12-2" stroke="#b8c4bb" />
          <path d="M18 16l8-12 4 2-7 11z" fill="#f8b62c" /><path d="M26 4l2-3 4 2-2 3z" fill="#ef5b5b" />
          <path d="M36 9c0-4 3-5 8-5s8 1 8 5v17c0 2-16 2-16 0z" fill="#1479ee" />
          <path d="M41 4c0-4 6-4 6 0" fill="none" stroke="#0c5cc0" strokeWidth="1.500" /><path d="M38 15h12v7H38z" fill="#0c62d6" /><path d="M38 25h10" stroke="#b14be0" strokeWidth="2" />
        </svg>
      </label>
      <nav className="ms-[6px] flex items-center gap-[7px]">
        {taskApps.map(([name, icon]) => (
          <button key={name} aria-label={name} className="flex size-12 items-center justify-center">
            {icon || <ChromeIcon />}
          </button>
        ))}
      </nav>
    </div>
    <div className="ms-[140px] me-[26px] flex items-center">
      <button aria-label="الرموز المخفية"><ChevronUp size={20} strokeWidth={1.8} /></button>
      <svg viewBox="0 0 20 20" className="ms-5 size-5">
        <path d="M5 15a5 5 0 0 1-1-9 6 6 0 0 1 11-1 5 5 0 0 1 1 9z" fill="#8c8c90" stroke="#444" />
        <circle cx="14" cy="13.500" r="6" fill="#1173d4" />
        <path d="M14 10v1.500M14 12.500v4" stroke="#fff" strokeWidth="1.600" />
      </svg>
      <span className="ms-[22px] text-[14px]">ENG</span>
      <svg viewBox="0 0 20 18" className="ms-[22px] h-[18px] w-5" fill="none" stroke="#1b1b1b" strokeWidth="1.600">
        <path d="M1 7c5-5.500 13-5.500 18 0" stroke="#b7aba0" /><path d="M4 10c3.500-3.500 8.500-3.500 12 0M6.800 13c2-2 4.400-2 6.400 0" /><circle cx="10" cy="15.500" r="1" fill="#1b1b1b" />
      </svg>
      <svg viewBox="0 0 20 18" className="ms-2.5 h-[18px] w-5" fill="none" stroke="#1b1b1b" strokeWidth="1.400">
        <path d="M1 6.500h3L8.500 2v14L4 11.500H1z" /><path d="M11 6c1.500 2 1.500 4 0 6" /><path d="M13.500 4c2.500 3 2.500 7 0 10M16 2c3.500 4 3.500 10 0 14" stroke="#b7aba0" />
      </svg>
      <svg viewBox="0 0 20 18" className="ms-2.5 h-[18px] w-5">
        <rect x="1.500" y="5" width="15" height="10.500" rx="2.500" fill="none" stroke="#1b1b1b" strokeWidth="1.500" /><rect x="4" y="7.500" width="10" height="5.500" fill="#1b1b1b" /><path d="M17.500 8.500h2v4h-2zM4.500 0 0 6h3l-1 4 5-6H4z" fill="#1b1b1b" />
      </svg>
      <div className="ms-[18px] w-[66px] text-left text-[14px] leading-[19px]">
        <div>١٠:٢١ ص</div>
        <div>٢٠٢٤/٠١/٠٧</div>
      </div>
      <button aria-label="الإشعارات" className="ms-[11px]"><Bell size={18} color="#1846a5" fill="#1846a5" /></button>
    </div>
  </footer>
);

const Watermark = () => (
  <div dir="ltr" aria-hidden="true" className="pointer-events-none absolute bottom-0 left-[844px] flex w-[232px] flex-col items-center text-[#8c8c8c] opacity-25">
    <span className="font-['DejaVu_Sans',sans-serif] text-[64px] leading-[40px] font-bold whitespace-nowrap">مستقل</span>
    <span className="font-['Liberation_Sans',sans-serif] text-[39px] leading-[74px] font-bold whitespace-nowrap">mostaql.com</span>
  </div>
);

export default function App() {
  return (
    <div dir="rtl" className="relative flex h-screen flex-col overflow-hidden bg-white font-['Open_Sans','DejaVu_Sans',sans-serif]">
      <div className="relative shrink-0 bg-black">
        <Wallpaper />
        <div className="relative">
          <TabStrip />
          <Toolbar />
          <Bookmarks />
        </div>
      </div>

      <div className="flex min-h-0 flex-1 font-['Liberation_Sans','DejaVu_Sans',sans-serif]">
        <Scrollbar />
        <div className="flex min-w-0 flex-1 flex-col overflow-hidden">
          <HeaderBar />
          <main className="flex min-h-0 flex-1 gap-[58px] overflow-hidden ps-[139px] pe-[178px]">
            <div className="min-w-0 flex-1">
              <ul className="mt-1 flex flex-col gap-[19px]">
                {lessons.map((l) => (
                  <LessonCard key={l} title={l} />
                ))}
              </ul>
              <button aria-label="إضافة" className="mt-[38px] flex h-[50px] w-[245px] items-start rounded-lg bg-[#028ccb] px-[27px] pt-[15px]">
                <span className="size-[19px] rounded-sm border-2 border-white" />
              </button>
            </div>
            <Tips />
          </main>
        </div>
      </div>

      <Taskbar />
      <Watermark />
    </div>
  );
}
